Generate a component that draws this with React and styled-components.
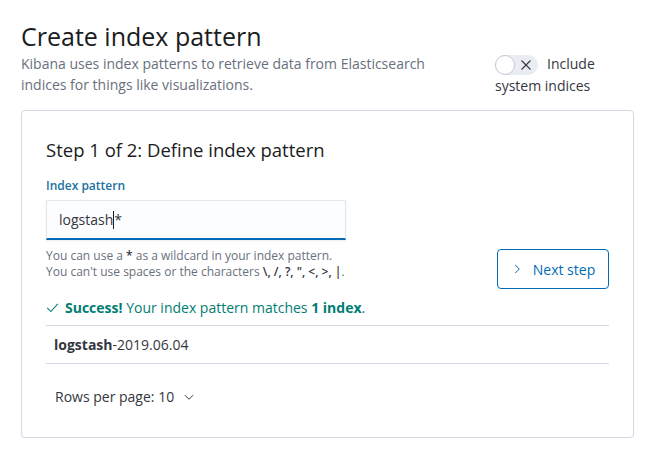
import React from "react";
import styled, { createGlobalStyle } from "styled-components";

const GlobalStyle = createGlobalStyle`
  body {
    margin: 0;
    background: #ffffff;
    font-family: "Open Sans", "Noto Sans", sans-serif;
    color: #343741;
  }
`;

const Page = styled.div`
  padding: 20px 16px 0 21px;
  width: 650px;
  box-sizing: border-box;
`;

const Header = styled.div`
  display: flex;
  justify-content: space-between;
  align-items: flex-start;
`;

const Title = styled.h1`
  margin: 0;
  font-size: 25px;
  line-height: 32px;
  font-weight: 500;
  color: #1a1c21;
`;

const Description = styled.p`
  margin: 1px 0 0;
  width: 420px;
  font-size: 14px;
  line-height: 21px;
  color: #69707d;
`;

const SwitchWrap = styled.div`
  width: 139px;
  margin-top: 33px;
  font-size: 14px;
  line-height: 21px;
  color: #343741;
`;

const Track = styled.span`
  display: inline-flex;
  align-items: center;
  vertical-align: middle;
  width: 43px;
  height: 20px;
  border-radius: 10px;
  background: #e9edf3;
  margin-right: 9px;
`;

const Thumb = styled.span`
  width: 20px;
  height: 20px;
  border-radius: 50%;
  background: #fff;
  border: 1px solid #c2c9d4;
  box-sizing: border-box;
`;

const Card = styled.div`
  margin-top: 14px;
  border: 1px solid #d3dae6;
  border-radius: 4px;
  box-shadow: 0 2px 2px -1px rgba(152, 162, 179, 0.3);
  padding: 24px 24px 30px;
`;

const StepTitle = styled.h2`
  margin: 1px 0 0;
  font-size: 18.5px;
  line-height: 28px;
  font-weight: 500;
  color: #1a1c21;
`;

const FormRow = styled.div`
  display: flex;
  justify-content: space-between;
  align-items: flex-start;
  margin-top: 14px;
`;

const Label = styled.div`
  font-size: 12px;
  line-height: 16px;
  font-weight: 600;
  color: #1a73a0;
`;

const FakeInput = styled.div`
  margin-top: 6px;
  width: 300px;
  height: 40px;
  box-sizing: border-box;
  padding: 0 12px;
  display: flex;
  align-items: center;
  background: #fcfdfe;
  border: 1px solid #e3e7ee;
  border-bottom: 2px solid #006bb4;
  box-shadow: 0 1px 2px rgba(0, 0, 0, 0.08);
  font-size: 14px;
  color: #343741;
`;

const Caret = styled.span`
  display: inline-block;
  width: 1px;
  height: 18px;
  background: #1a1c21;
`;

const Help = styled.div`
  margin-top: 8px;
  font-size: 12px;
  line-height: 16px;
  color: #69707d;

  b {
    font-weight: 600;
    color: #343741;
  }
`;

const Button = styled.button`
  margin-top: 71px;
  width: 112px;
  height: 40px;
  display: flex;
  align-items: center;
  justify-content: center;
  gap: 10px;
  border: 1px solid #006bb4;
  border-radius: 4px;
  background: #fff;
  color: #006bb4;
  font-family: "Open Sans", sans-serif;
  font-size: 14px;
  padding: 0 12px;
`;

const Success = styled.div`
  margin-top: 8px;
  display: flex;
  align-items: center;
  gap: 6px;
  font-size: 14px;
  line-height: 21px;
  color: #017d73;

  b {
    font-weight: 700;
  }
`;

const Table = styled.div`
  margin-top: 7px;
  border-top: 1px solid #d3dae6;
`;

const Row = styled.div`
  padding: 10px 8px;
  border-bottom: 1px solid #d3dae6;
  font-size: 14px;
  line-height: 17px;
  color: #343741;

  b {
    font-weight: 700;
  }
`;

const Pager = styled.div`
  margin-top: 23px;
  padding-left: 9px;
  display: flex;
  align-items: center;
  gap: 9px;
  font-size: 14px;
  line-height: 20px;
  color: #343741;
`;

const Chevron = ({ dir = "right", size = 12 }) => (
  <svg width={size} height={size} viewBox="0 0 16 16" fill="none">
    {dir === "right" ? (
      <path d="M5.5 2.5 L11 8 L5.5 13.5" stroke="currentColor" strokeWidth="1.3" />
    ) : (
      <path d="M2.5 5.5 L8 11 L13.5 5.5" stroke="currentColor" strokeWidth="1.3" />
    )}
  </svg>
);

const Check = () => (
  <svg width="13" height="13" viewBox="0 0 16 16" fill="none">
    <path d="M1.5 8.5 L6 13 L14.5 3.5" stroke="currentColor" strokeWidth="1.3" />
  </svg>
);

const Cross = () => (
  <svg width="12" height="12" viewBox="0 0 16 16" fill="none" style={{ marginLeft: 5 }}>
    <path d="M2 2 L14 14 M14 2 L2 14" stroke="#343741" strokeWidth="1.5" />
  </svg>
);

const App = () => {
  return (
    <Page>
      <GlobalStyle />
      <Header>
        <div>
          <Title>Create index pattern</Title>
          <Description>
            Kibana uses index patterns to retrieve data from Elasticsearch
            indices for things like visualizations.
          </Description>
        </div>
        <SwitchWrap>
          <Track>
            <Thumb />
            <Cross />
          </Track>
          Include system indices
        </SwitchWrap>
      </Header>

      <Card>
        <StepTitle>Step 1 of 2: Define index pattern</StepTitle>
        <FormRow>
          <div>
            <Label>Index pattern</Label>
            <FakeInput>
              logstash
              <Caret />*
            </FakeInput>
            <Help>
              You can use a <b>*</b> as a wildcard in your index pattern.
              <br />
              You can't use spaces or the characters <b>\, /, ?, ", &lt;, &gt;, |</b>.
            </Help>
          </div>
          <Button>
            <Chevron dir="right" />
            Next step
          </Button>
        </FormRow>

        <Success>
          <Check />
          <span>
            <b>Success!</b> Your index pattern matches <b>1 index</b>.
          </span>
        </Success>

        <Table>
          <Row>
            <b>logstash</b>-2019.06.04
          </Row>
        </Table>

        <Pager>
          Rows per page: 10
          <Chevron dir="down" />
        </Pager>
      </Card>
    </Page>
  );
};

export default App;
